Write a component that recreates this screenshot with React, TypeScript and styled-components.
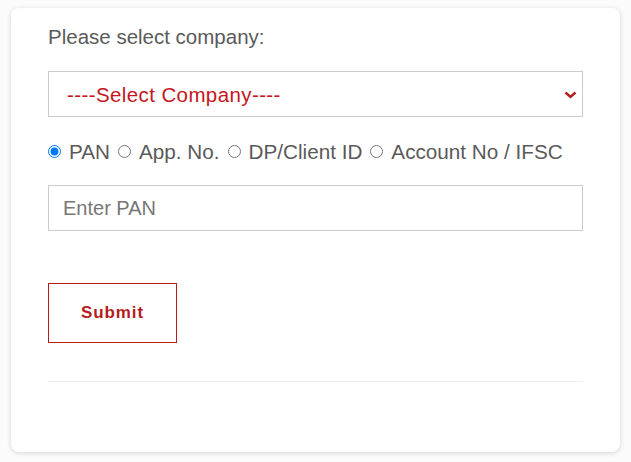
import React from "react";
import styled, { createGlobalStyle } from "styled-components";

const GlobalStyle = createGlobalStyle`
  html, body { margin: 0; padding: 0; background: #fbfbfb; }
  body { font-family: "Liberation Sans", Arial, sans-serif; }
  * { box-sizing: border-box; }
`;

const Page = styled.div`
  padding: 8px 11px 11px 11px;
`;

const Card = styled.form`
  width: 609px;
  background: #fff;
  border-radius: 8px;
  box-shadow: 0 1px 5px rgba(0, 0, 0, 0.16);
  padding: 17px 37px 70px 37px;
  display: flex;
  flex-direction: column;
`;

const Label = styled.div`
  font-size: 20.5px;
  line-height: 23px;
  color: #5a5a5a;
`;

const SelectWrap = styled.div`
  position: relative;
  margin-top: 23px;
  height: 46px;
`;

const Select = styled.select`
  appearance: none;
  width: 100%;
  height: 46px;
  border: 1px solid #ccc;
  background: #fff;
  border-radius: 0;
  padding: 0 40px 0 18px;
  font-family: "Liberation Sans", Arial, sans-serif;
  font-size: 20.5px;
  letter-spacing: 0.4px;
  color: #c4161c;
  outline: none;
`;

const Chevron = styled.svg`
  position: absolute;
  right: 6px;
  top: 20px;
  width: 13px;
  height: 8px;
  pointer-events: none;
`;

const RadioRow = styled.div`
  margin-top: 23px;
  display: flex;
  align-items: center;
  gap: 8px;
  font-size: 20.7px;
  line-height: 23px;
  color: #5a5a5a;
`;

const RadioLabel = styled.label`
  display: inline-flex;
  align-items: center;
`;

const Radio = styled.input`
  margin: 0 8px 0 0;
  width: 13px;
  height: 13px;
`;

const TextInput = styled.input`
  margin-top: 22px;
  width: 100%;
  height: 46px;
  border: 1px solid #ccc;
  border-radius: 0;
  padding: 0 14px;
  font-family: "Liberation Sans", Arial, sans-serif;
  font-size: 20px;
  color: #333;
  outline: none;
  &::placeholder { color: #777; }
`;

const SubmitButton = styled.button`
  margin-top: 52px;
  align-self: flex-start;
  width: 129px;
  height: 60px;
  background: #fff;
  border: 1px solid #b71c1c;
  border-radius: 0;
  color: #b71c1c;
  font-family: "Liberation Sans", Arial, sans-serif;
  font-weight: bold;
  font-size: 17px;
  letter-spacing: 0.9px;
  cursor: pointer;
`;

const Divider = styled.hr`
  margin: 38px 0 0 0;
  border: none;
  border-top: 1px solid #eee;
  height: 0;
  width: 100%;
`;

export default function App() {
  return (
    <>
      <GlobalStyle />
      <Page>
        <Card onSubmit={(e) => e.preventDefault()}>
          <Label>Please select company:</Label>
          <SelectWrap>
            <Select defaultValue="">
              <option value="">----Select Company----</option>
            </Select>
            <Chevron viewBox="0 0 13 8">
              <path d="M1.5 1.5 L6.5 6 L11.5 1.5" fill="none" stroke="#b71c1c" strokeWidth="2.4" />
            </Chevron>
          </SelectWrap>
          <RadioRow>
            <RadioLabel>
              <Radio type="radio" name="mode" defaultChecked />
              PAN
            </RadioLabel>
            <RadioLabel>
              <Radio type="radio" name="mode" />
              App. No.
            </RadioLabel>
            <RadioLabel>
              <Radio type="radio" name="mode" />
              DP/Client ID
            </RadioLabel>
            <RadioLabel>
              <Radio type="radio" name="mode" />
              Account No / IFSC
            </RadioLabel>
          </RadioRow>
          <TextInput type="text" placeholder="Enter PAN" />
          <SubmitButton type="submit">Submit</SubmitButton>
          <Divider />
        </Card>
      </Page>
    </>
  );
}
